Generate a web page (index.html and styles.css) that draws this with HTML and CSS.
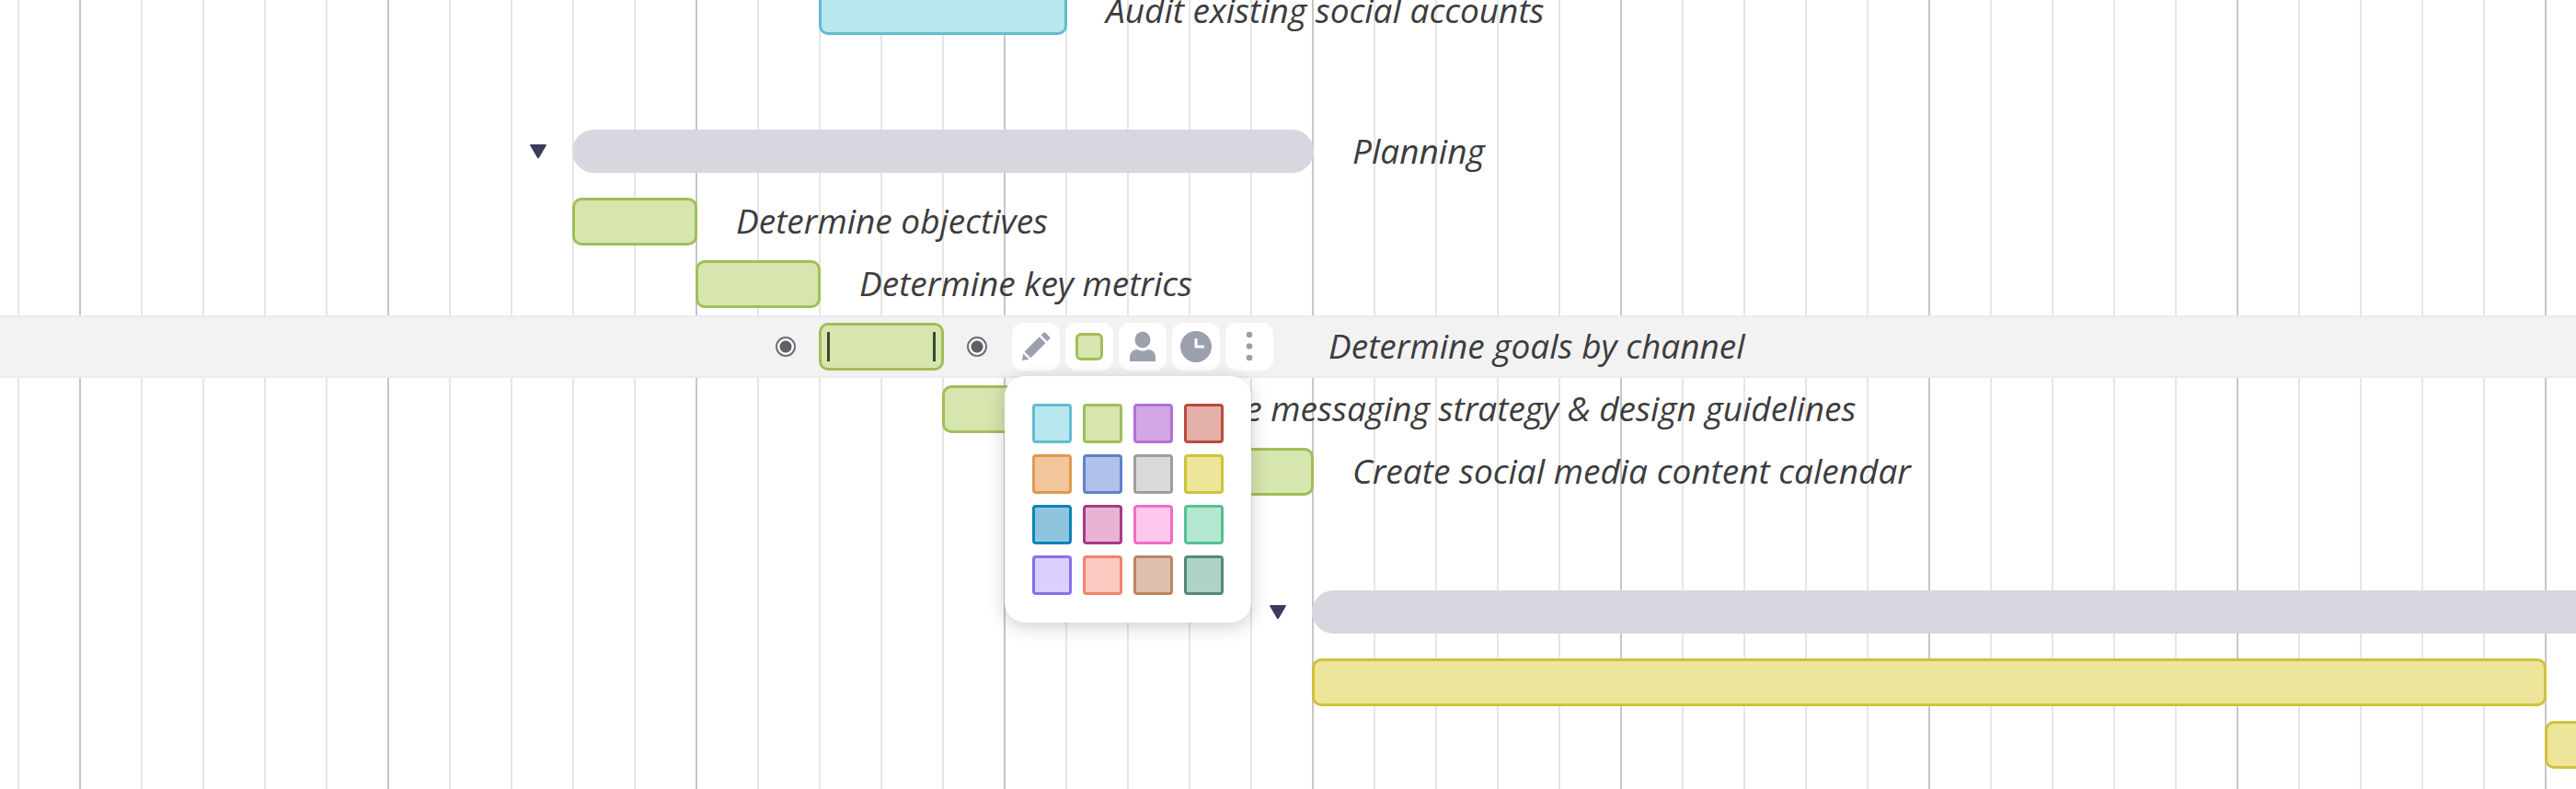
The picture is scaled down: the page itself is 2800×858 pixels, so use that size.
FILE: index.html
```html
<!DOCTYPE html>
<html lang="en">

<head>
    <meta charset="utf-8">
    <title>Gantt Chart</title>
    <link rel="stylesheet" href="styles.css">
</head>

<body>
    <main class="chart">
        <div class="row" style="--start: 13; --days: 4">
            <div class="lead"></div>
            <div class="bar blue"></div>
            <span class="label">Audit existing social accounts</span>
        </div>

        <div class="row group" style="--start: 9; --days: 12">
            <div class="lead">
                <button class="toggle" aria-label="Collapse Planning"><svg width="18" height="16" viewBox="0 0 18 16"><path d="M1 0h16q1.500 0 .6 1.500L10 14.500q-1 1.400-2 0L.4 1.500Q-.5 0 1 0z"/></svg></button>
            </div>
            <div class="bar summary"></div>
            <span class="label">Planning</span>
        </div>
        <div class="row" style="--start: 9; --days: 2">
            <div class="lead"></div>
            <div class="bar green"></div>
            <span class="label">Determine objectives</span>
        </div>
        <div class="row" style="--start: 11; --days: 2">
            <div class="lead"></div>
            <div class="bar green"></div>
            <span class="label">Determine key metrics</span>
        </div>
        <div class="row active" style="--start: 13; --days: 2">
            <div class="lead"><i class="dot"></i></div>
            <div class="bar green">
                <i class="handle"></i>
                <i class="handle"></i>
            </div>
            <i class="dot"></i>
            <div class="tools">
                <button class="tool" aria-label="Edit">
                    <svg width="32" height="32" viewBox="0 0 32 32"><path d="M21.500 3.500 24 1q1.300-1.200 2.600 0l4.200 4.200q1.200 1.300 0 2.600l-2.500 2.500zM19.700 5.300l6.800 6.800L10.300 28.300l-6.800-6.800zM2.200 23.500l6.300 6.300L1 31z"/></svg>
                </button>
                <button class="tool" aria-label="Color"><i class="chip green"></i></button>
                <button class="tool" aria-label="Assign">
                    <svg width="32" height="34" viewBox="0 0 32 34"><ellipse cx="16" cy="9.500" rx="8.500" ry="9"/><path d="M2 33v-3.500q0-9 8-9.500 6 3.400 12 0 8 .5 8 9.500V33z"/></svg>
                </button>
                <button class="tool" aria-label="Time">
                    <svg width="34" height="34" viewBox="0 0 34 34"><circle cx="17" cy="17" r="17"/><path class="hands" d="M17 8v9h9"/></svg>
                </button>
                <button class="tool" aria-label="More">
                    <svg width="8" height="34" viewBox="0 0 8 34"><circle cx="4" cy="4" r="3.300"/><circle cx="4" cy="16.500" r="3.300"/><circle cx="4" cy="29" r="3.300"/></svg>
                </button>
                <div class="palette">
                    <button class="swatch blue" aria-label="Blue"></button>
                    <button class="swatch green" aria-label="Green"></button>
                    <button class="swatch purple" aria-label="Purple"></button>
                    <button class="swatch red" aria-label="Red"></button>
                    <button class="swatch orange" aria-label="Orange"></button>
                    <button class="swatch indigo" aria-label="Indigo"></button>
                    <button class="swatch grey" aria-label="Grey"></button>
                    <button class="swatch yellow" aria-label="Yellow"></button>
                    <button class="swatch ocean" aria-label="Ocean"></button>
                    <button class="swatch plum" aria-label="Plum"></button>
                    <button class="swatch pink" aria-label="Pink"></button>
                    <button class="swatch mint" aria-label="Mint"></button>
                    <button class="swatch lilac" aria-label="Lilac"></button>
                    <button class="swatch coral" aria-label="Coral"></button>
                    <button class="swatch brown" aria-label="Brown"></button>
                    <button class="swatch teal" aria-label="Teal"></button>
                </div>
            </div>
            <span class="label">Determine goals by channel</span>
        </div>
        <div class="row" style="--start: 15; --days: 2">
            <div class="lead"></div>
            <div class="bar green"></div>
            <span class="label">Determine messaging strategy &amp; design guidelines</span>
        </div>
        <div class="row" style="--start: 19; --days: 2">
            <div class="lead"></div>
            <div class="bar green"></div>
            <span class="label">Create social media content calendar</span>
        </div>

        <div class="row group" style="--start: 21">
            <div class="lead">
                <button class="toggle" aria-label="Collapse group"><svg width="18" height="16" viewBox="0 0 18 16"><path d="M1 0h16q1.500 0 .6 1.500L10 14.500q-1 1.400-2 0L.4 1.500Q-.5 0 1 0z"/></svg></button>
            </div>
            <div class="bar summary ongoing"></div>
        </div>
        <div class="row" style="--start: 21; --days: 20">
            <div class="lead"></div>
            <div class="bar yellow"></div>
        </div>
        <div class="row" style="--start: 41">
            <div class="lead"></div>
            <div class="bar yellow ongoing"></div>
        </div>
    </main>
</body>

</html>
```
FILE: styles.css
```css
* {
    box-sizing: border-box;
}
body {
    margin: 0;
    overflow: hidden;
    background-color: #fff;
    color: #3c3c3e;
    font-family: "Open Sans", Lato, sans-serif;
}
button {
    padding: 0;
    border: 0;
    background: none;
    cursor: pointer;
}
svg {
    display: block;
}

/* day lines every 67px, week lines every fifth day */
.chart {
    --day: 67px;
    --origin: 19px;
    min-height: calc(100vh + 22px);
    margin-top: -22px;
    background-image:
        repeating-linear-gradient(90deg, #c6c6c6 0 2px, transparent 2px 335px),
        repeating-linear-gradient(90deg, #e6e6e6 0 2px, transparent 2px 67px);
    background-position: 86px 0, 19px 0;
    background-size: 335px 100%, 67px 100%;
}

.row {
    display: flex;
    align-items: center;
    height: 68px;
}
.group {
    height: auto;
    padding: 95px 0 19px;
}
.active {
    background-color: #f2f2f2;
    border-top: 2px solid #ebebeb;
    border-bottom: 2px solid #ebebeb;
}
.lead {
    display: flex;
    flex: none;
    justify-content: flex-end;
    width: calc(var(--origin) + var(--start) * var(--day));
}
.label {
    margin-left: 42px;
    padding-bottom: 2px;
    font-size: 37px;
    font-style: italic;
    line-height: 44px;
    white-space: nowrap;
}

.bar {
    display: flex;
    flex: none;
    align-items: center;
    justify-content: space-between;
    width: calc(var(--days) * var(--day) + 2px);
    height: 52px;
    padding: 0 6px;
    border: 3px solid;
    border-radius: 10px;
}
.summary {
    height: 47px;
    border: 0;
    border-radius: 24px;
    background-color: #d7d7e0;
}
/* runs on past the visible range */
.ongoing {
    flex: 1;
    border-right: 0;
    border-top-right-radius: 0;
    border-bottom-right-radius: 0;
}
.toggle {
    margin-right: 28px;
    fill: #3b3b5e;
}

.handle {
    width: 3px;
    height: 32px;
    background-color: #3e472f;
}
.dot {
    width: 22px;
    height: 22px;
    border: 2px solid #6b6e73;
    border-radius: 50%;
    background: radial-gradient(circle, #5d6166 6px, #fff 7px);
}
.lead .dot {
    margin-right: 25px;
}
.bar + .dot {
    margin-left: 25px;
}

.tools {
    position: relative;
    display: flex;
    gap: 6px;
    margin-left: 27px;
}
.tools + .label {
    margin-left: 60px;
}
.tool {
    display: flex;
    align-items: center;
    justify-content: center;
    width: 52px;
    height: 52px;
    border-radius: 12px;
    background-color: #fff;
    fill: #9aa1ad;
}
.hands {
    fill: none;
    stroke: #fff;
    stroke-width: 3;
}
.chip {
    width: 30px;
    height: 30px;
    border: 3px solid;
    border-radius: 6px;
}

.palette {
    position: absolute;
    z-index: 1;
    top: 58px;
    left: -8px;
    display: grid;
    grid-template-columns: repeat(4, 43px);
    gap: 12px;
    padding: 30px;
    border-radius: 22px;
    background-color: #fff;
    box-shadow: 0 4px 20px rgba(0, 0, 0, 0.2);
}
.swatch {
    height: 43px;
    border: 3px solid;
    border-radius: 4px;
}

.blue { background-color: #b9e7ef; border-color: #62bcd0; }
.green { background-color: #d6e6ae; border-color: #a1be58; }
.purple { background-color: #d3a6e6; border-color: #b26fd4; }
.red { background-color: #e2b0a8; border-color: #b94a3c; }
.orange { background-color: #f1c69b; border-color: #df9a50; }
.indigo { background-color: #b2c1ea; border-color: #5f80cc; }
.grey { background-color: #d9d9d9; border-color: #9d9d9d; }
.yellow { background-color: #ede59a; border-color: #cfc23c; }
.ocean { background-color: #8fc4df; border-color: #0a84b9; }
.plum { background-color: #e6b3d5; border-color: #a83a83; }
.pink { background-color: #fec7ec; border-color: #f26cc4; }
.mint { background-color: #b4e7d0; border-color: #54c096; }
.lilac { background-color: #dccffe; border-color: #8570ec; }
.coral { background-color: #fec9c0; border-color: #f2836d; }
.brown { background-color: #dcc0ad; border-color: #be8460; }
.teal { background-color: #aed2c5; border-color: #528a77; }
```
